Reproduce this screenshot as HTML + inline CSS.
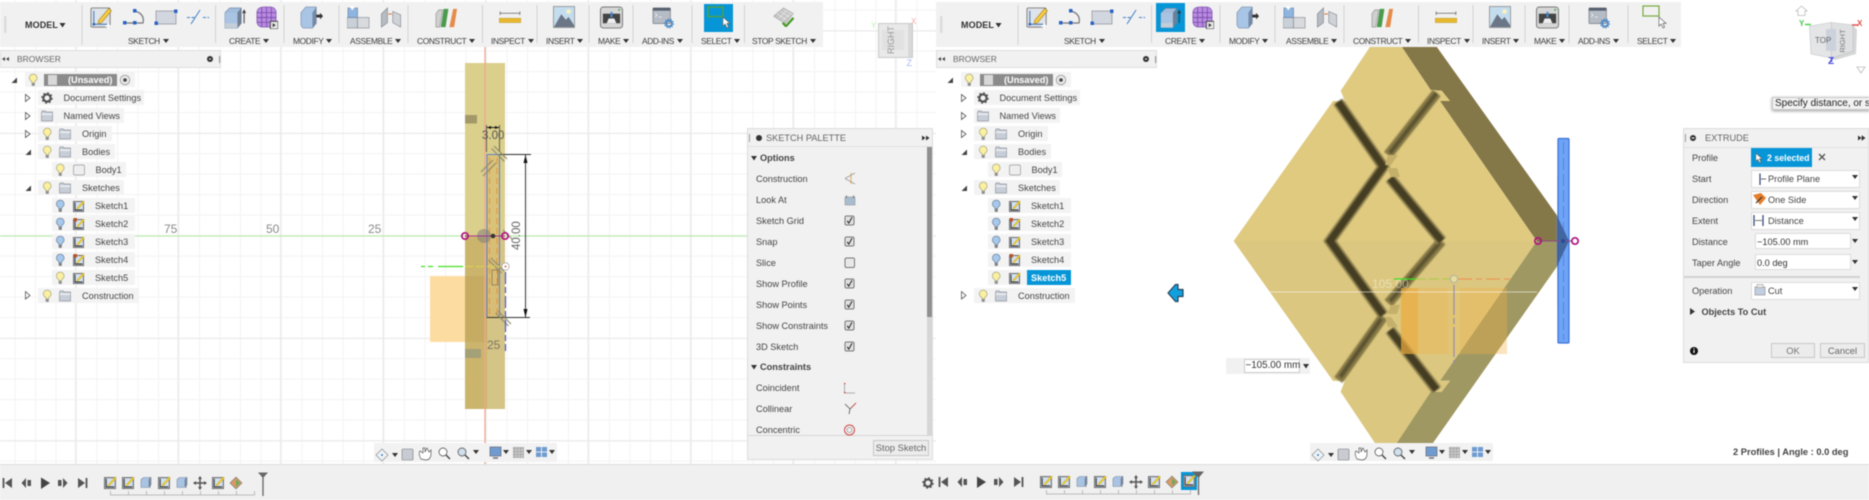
<!DOCTYPE html>
<html><head><meta charset="utf-8"><title>Fusion</title>
<style>
html,body{margin:0;padding:0;background:#fff}
#root{position:relative;width:1869px;height:500px;overflow:hidden;background:#fff;font-family:"Liberation Sans",sans-serif;filter:blur(.45px)}
.p{position:absolute;top:0;height:500px;overflow:hidden}
.abs,.t,.l,.r{position:absolute}
svg{position:absolute;left:0;top:0;overflow:visible}
.t{white-space:nowrap;line-height:12px;height:12px;margin-top:-6px;font-size:9.2px;color:#444}
.l{white-space:nowrap;line-height:10px;top:36px;font-size:8.4px;letter-spacing:-.35px;color:#3c3c3c}
.l i{display:inline-block;width:0;height:0;border-left:3px solid transparent;border-right:3px solid transparent;border-top:4.5px solid #333;margin-left:3px;vertical-align:1px}
.r{background:#f3f3f3;height:15px}
.b{font-weight:bold}
.g{background-color:#fff;background-image:linear-gradient(to right,#e8e8e8 1px,transparent 1px),linear-gradient(to bottom,#e9e9e9 1px,transparent 1px),linear-gradient(to right,#f3f3f3 1px,transparent 1px),linear-gradient(to bottom,#f3f3f3 1px,transparent 1px);background-size:102.5px 102.5px,102.5px 102.5px,20.5px 20.5px,20.5px 20.5px;background-position:75px 0,0 30.5px,14.5px 0,0 9.7px}
.sel{position:absolute;background:#fff;border:1px solid #ddd;box-sizing:border-box;height:18px}
.btn{position:absolute;background:#ececec;border:1px solid #c8c8c8;box-sizing:border-box;text-align:center;color:#666;font-size:9.4px}
</style></head><body>
<div id="root">
<svg width="0" height="0" style="position:absolute"><defs>
<filter id="gb" x="-10%" y="-10%" width="120%" height="120%"><feGaussianBlur stdDeviation="0.9"/></filter>
<symbol id="bulb" viewBox="0 0 10 14"><path d="M5 .7a4 4 0 0 0-2.200 7.400c.6.500.7 1.300.7 2h3c0-.7.100-1.500.7-2A4 4 0 0 0 5 .7z" fill="#fbf0a0" stroke="#9c9a7c" stroke-width=".7"/><rect x="3.400" y="10.500" width="3.200" height="2.800" fill="#8a8a8a"/></symbol>
<symbol id="bulbb" viewBox="0 0 10 14"><path d="M5 .7a4 4 0 0 0-2.200 7.400c.6.500.7 1.300.7 2h3c0-.7.100-1.500.7-2A4 4 0 0 0 5 .7z" fill="#a6c8ec" stroke="#66788e" stroke-width=".7"/><rect x="3.400" y="10.500" width="3.200" height="2.800" fill="#7a7a7a"/></symbol>
<symbol id="folder" viewBox="0 0 12 11"><path d="M.5 2V10.500H11.500V1.500H5L4.300.5H1z" fill="#c8ced8" stroke="#8f959e" stroke-width=".7"/><rect x=".8" y="3" width="10.400" height="1.400" fill="#eef0f2"/></symbol>
<symbol id="skm" viewBox="0 0 12 12"><rect x=".5" y="1.500" width="10" height="10" fill="#d3e0f0" stroke="#6c6c6c"/><path d="M2 2.500V10H9.500" fill="none" stroke="#222" stroke-width=".9"/><path d="M3.500 8.500L10.300 .8l1.200 1.200L4.600 9.400z" fill="#f8d31e" stroke="#9a7f20" stroke-width=".3"/></symbol>
<symbol id="skp" viewBox="0 0 12 12"><rect x=".5" y="1.500" width="10" height="10" fill="#d3e0f0" stroke="#6c6c6c"/><path d="M2 2.500V10H9.500" fill="none" stroke="#222" stroke-width=".9"/><path d="M3.500 8.500L10.300 .8l1.200 1.200L4.600 9.400z" fill="#f8d31e" stroke="#9a7f20" stroke-width=".3"/><rect x=".5" y="0" width="3.500" height="3.500" fill="#b9532b"/></symbol>
<symbol id="gear" viewBox="0 0 12 12"><circle cx="6" cy="6" r="3.600" fill="none" stroke="#555" stroke-width="2.200"/><circle cx="6" cy="6" r="5" fill="none" stroke="#555" stroke-width="1.500" stroke-dasharray="1.800 2.120"/></symbol>
<symbol id="bigsk" viewBox="0 0 24 24"><rect x="1" y="2" width="20" height="20" rx="1.500" fill="#dfe3ea" stroke="#7d7d7d"/><path d="M4 5V19H18" fill="none" stroke="#3b6fb5" stroke-width="1"/><circle cx="4" cy="19" r="1.400" fill="#2a63b5"/><path d="M9 15L19.500 2.500l3 2.500L12 17.500l-3.500 1z" fill="#f6c93f" stroke="#9a7d25" stroke-width=".6"/><path d="M16 21h6M19 18v6" stroke="#fff" stroke-width="1.800"/></symbol>
<symbol id="box" viewBox="0 0 24 24"><path d="M1 7L6 2H18V18L14 23H1z" fill="#a3bddd" stroke="#6f86a5" stroke-width=".7"/><path d="M14 7V23L18 18V2z" fill="#6f7f94"/><rect x="1" y="7" width="13" height="16" fill="#a9c3e2"/><path d="M1 18H14V23H1z" fill="#c4ced8"/><path d="M21 18V5M19.500 7.500L21 4.500l1.500 3" stroke="#333" fill="none" stroke-width="1"/></symbol>
<symbol id="mesh" viewBox="0 0 24 24"><path d="M2 6Q3 1 9 1H16Q21 1 22 6V17Q21 22 16 22H8Q3 22 2 17z" fill="#b88ae0" stroke="#7b52a8" stroke-width=".7"/><path d="M2 7H22M2 12H22M2 17H22M7 1V22M12 1V22M17 1V22" stroke="#6b3fa0" stroke-width=".7"/><rect x="16" y="16" width="8" height="8" fill="#e6e6e6" stroke="#444"/><path d="M18.500 18v4l3-2z" fill="#333"/></symbol>
<symbol id="press" viewBox="0 0 24 24"><path d="M1 7L6 1H17V18L13 23H3L1 20z" fill="#a9c5e6" stroke="#7d90a8" stroke-width=".7"/><path d="M13 7V23L17 18V1z" fill="#7489a6"/><path d="M17 9H21V7L24 10.500 21 14V12H17z" fill="#333"/></symbol>
<symbol id="asm1" viewBox="0 0 24 24"><rect x="0" y="12" width="11" height="11" fill="#c9d0d7" stroke="#8a8f95" stroke-width=".7"/><rect x="11" y="12" width="12" height="11" fill="#d8dadd" stroke="#8a8f95" stroke-width=".7"/><path d="M11 12V2H1V12z" fill="#8eb4e0" stroke="#6f86a5" stroke-width=".7"/><path d="M3 1.500h5M5.500 -1v5" stroke="#fff" stroke-width="1.800"/></symbol>
<symbol id="asm2" viewBox="0 0 24 24"><path d="M1 8L8 1V18L1 23z" fill="#b7bcc3" stroke="#7f858d" stroke-width=".7"/><path d="M14 5L23 9V23L14 18z" fill="#cfd3d8" stroke="#7f858d" stroke-width=".7"/><path d="M9 8H13" stroke="#d8702e" stroke-width="1.200"/></symbol>
<symbol id="plane" viewBox="0 0 24 24"><path d="M1 8L4 4H8L5 22H1z" fill="#cfcfcf" stroke="#8c8c8c" stroke-width=".6"/><path d="M6 22L9 3 H14L11 22z" fill="#4b9a4d"/><path d="M15 22L19 3H23L20 22z" fill="#e58c4b"/></symbol>
<symbol id="ruler" viewBox="0 0 24 14"><path d="M1 2.500H23M1 .5V4.500M23 .5V4.500" stroke="#666" stroke-width=".9"/><rect x="0" y="8" width="24" height="5" fill="#e8b82e" stroke="#a98a22" stroke-width=".4"/></symbol>
<symbol id="image" viewBox="0 0 24 24"><rect x=".5" y=".5" width="23" height="23" fill="#c3dcee" stroke="#999"/><circle cx="17" cy="6" r="2.500" fill="#faf3c0"/><path d="M1 23L9 9 14 15 17 12 23 21V23z" fill="#6b7686"/></symbol>
<symbol id="make" viewBox="0 0 24 24"><rect x=".5" y="1" width="23" height="22" rx="3" fill="#d6d6d6" stroke="#777"/><rect x="3" y="8" width="18" height="10" fill="#444"/><path d="M7 18L9 13H15L17 18z" fill="#eee"/><path d="M12 6V12" stroke="#3f8ed8" stroke-width="2"/><circle cx="20" cy="4" r="1" fill="#3aa34a"/></symbol>
<symbol id="addin" viewBox="0 0 24 24"><rect x=".5" y="1" width="19" height="17" rx="1" fill="#b5bcc6" stroke="#8b8f96"/><rect x=".5" y="1" width="19" height="3" fill="#55606e"/><path d="M3 7L5 9 3 11M7 11H10" stroke="#fff" fill="none" stroke-width=".7"/><circle cx="18" cy="18" r="3.200" fill="none" stroke="#4a88c6" stroke-width="2"/><circle cx="18" cy="18" r="4.800" fill="none" stroke="#4a88c6" stroke-width="1.300" stroke-dasharray="1.500 1.500"/></symbol>
<symbol id="stop" viewBox="0 0 24 24"><path d="M0 11L12 1 24 8 14 20z" fill="#c5c5c5" stroke="#8e8e8e" stroke-width=".6"/><path d="M4 8L15 15M8 5L19 12M12 3L23 9M6 14L16 4M10 17L20 8" stroke="#ededed" stroke-width=".7"/><path d="M11 19L15 23 24 13" fill="none" stroke="#4d9a2d" stroke-width="2.800"/></symbol>
<symbol id="cursor" viewBox="0 0 10 14"><path d="M1 1V11L3.500 8.800 5.500 13 7.300 12.200 5.500 8H9z" fill="#fff" stroke="#666" stroke-width=".8"/></symbol>
<symbol id="chk" viewBox="0 0 10 10"><rect x=".5" y=".5" width="9" height="9" rx="1.500" fill="#e0e0e0" stroke="#777"/><path d="M2.700 5.300L4.300 7.700 7.500 1.800" fill="none" stroke="#222" stroke-width="1"/></symbol>
<symbol id="mtbox" viewBox="0 0 12 12"><path d="M1 3L3.500 1H11V8.500L8.500 11H1z" fill="#a9c3e2" stroke="#7a8da6" stroke-width=".6"/><path d="M8.500 3V11L11 8.500V1z" fill="#7c93b2"/></symbol>

<g id="dv"><rect x="4" y="16" width="2.500" height="17" fill="#dcdcdc"/>
<path d="M82 5V45M215.500 5V43M284 5V43M339 5V43M408 5V43M482.500 5V43M537 5V43M589 5V43M633 5V43M692 5V43" stroke="#d2d2d2" stroke-width="1" fill="none"/></g>

<g id="tb">
<use href="#bigsk" x="90" y="6" width="23" height="23"/>
<path d="M124 23H143Q145 14 135 11" fill="none" stroke="#777" stroke-width="1.200"/>
<rect x="123" y="21" width="3.500" height="3.500" fill="#2a63c5"/><rect x="133" y="21" width="3.500" height="3.500" fill="#2a63c5"/><rect x="133" y="9" width="3.500" height="3.500" fill="#2a63c5"/>
<rect x="156" y="11" width="20" height="13" fill="#d2d7df" stroke="#8a8f95" stroke-width=".7"/>
<rect x="154.500" y="21.500" width="3.500" height="3.500" fill="#2a63c5"/><rect x="174" y="9.500" width="3.500" height="3.500" fill="#2a63c5"/>
<path d="M187 17.500H195M203 17.500H209" stroke="#3f7fc8" stroke-width="1" stroke-dasharray="3 1.500"/><path d="M191 24L200 10" stroke="#3f7fc8" stroke-width="1"/>
<use href="#mesh" x="255" y="6" width="23" height="23"/>
<use href="#press" x="300" y="6" width="23" height="23"/>
<use href="#asm1" x="347" y="6" width="23" height="23"/>
<use href="#asm2" x="380" y="7" width="22" height="21"/>
<use href="#plane" x="435" y="6" width="23" height="23"/>
<use href="#ruler" x="499" y="11" width="22" height="12.500"/>
<use href="#image" x="553" y="6" width="22" height="22"/>
<use href="#make" x="600" y="6" width="23" height="23"/>
<use href="#addin" x="652" y="7" width="23" height="22"/>
</g>

<g id="tree">
<path d="M11.500 83H17V77.500z" fill="#444"/><path d="M25.500 94.500L30 98 25.500 101.500z" fill="#fff" stroke="#555" stroke-width=".8"/><path d="M25.500 112.500L30 116 25.500 119.500z" fill="#fff" stroke="#555" stroke-width=".8"/><path d="M25.500 130.500L30 134 25.500 137.500z" fill="#fff" stroke="#555" stroke-width=".8"/>
<path d="M25.500 155H31V149.500z" fill="#444"/><path d="M25.500 191H31V185.500z" fill="#444"/><path d="M25.500 291.500L30 295.500 25.500 299z" fill="#fff" stroke="#555" stroke-width=".8"/>
<use href="#bulb" x="28.500" y="73.500" width="9.500" height="13"/>
<rect x="48" y="75" width="9" height="10" fill="#d8d8d8"/>
<circle cx="125" cy="80" r="4.800" fill="#e8e8e8" stroke="#888" stroke-width=".7"/><circle cx="125" cy="80" r="1.800" fill="#444"/>
<use href="#gear" x="41" y="92" width="12" height="12"/>
<use href="#folder" x="41" y="110.500" width="12" height="11"/>
<use href="#bulb" x="42.500" y="127.500" width="9.500" height="13"/><use href="#folder" x="59" y="128.500" width="12" height="11"/>
<use href="#bulb" x="42.500" y="145.500" width="9.500" height="13"/><use href="#folder" x="59" y="146.500" width="12" height="11"/>
<use href="#bulb" x="55.500" y="163.500" width="9.500" height="13"/><rect x="73.500" y="165" width="11" height="10" rx="1.500" fill="#eee" stroke="#999" stroke-width=".7"/>
<use href="#bulb" x="42.500" y="181.500" width="9.500" height="13"/><use href="#folder" x="59" y="182.500" width="12" height="11"/>
<use href="#bulbb" x="55.500" y="199.500" width="9.500" height="13"/><use href="#skm" x="73" y="200" width="12" height="12"/>
<use href="#bulbb" x="55.500" y="217.500" width="9.500" height="13"/><use href="#skp" x="73" y="218" width="12" height="12"/>
<use href="#bulbb" x="55.500" y="235.500" width="9.500" height="13"/><use href="#skm" x="73" y="236" width="12" height="12"/>
<use href="#bulbb" x="55.500" y="253.500" width="9.500" height="13"/><use href="#skp" x="73" y="254" width="12" height="12"/>
<use href="#bulb" x="55.500" y="271.500" width="9.500" height="13"/><use href="#skm" x="73" y="272" width="12" height="12"/>
<use href="#bulb" x="42.500" y="289.500" width="9.500" height="13"/><use href="#folder" x="59" y="290.500" width="12" height="11"/>
<circle cx="210" cy="59" r="3" fill="#333"/><rect x="209" y="58.500" width="2" height="1" fill="#fff"/><rect x="219" y="56" width="1.200" height="7" fill="#999"/>
<path d="M2 59L5 57V61zM6 59L9 57V61z" fill="#444"/>
</g>

<g id="nav">
<path d="M382 449L388 455 382 461 376 455z" fill="#eef3f8" stroke="#888" stroke-width=".7"/><circle cx="382" cy="455" r="1" fill="#3b82c4" />
<path d="M392 453H398L395 457z" fill="#333"/>
<rect x="402" y="449" width="11" height="11" rx="1" fill="#c8ccd2" stroke="#777" stroke-width=".6"/>
<path d="M421 459Q418 454 420 451L423 453V448H425V452L427 448 429 452 431 450 431 455Q430 460 426 460z" fill="#fff" stroke="#555" stroke-width=".7"/>
<circle cx="443" cy="452" r="4" fill="#fff" stroke="#666" stroke-width=".9"/><path d="M446 455L450 459" stroke="#444" stroke-width="1.400"/>
<circle cx="462" cy="452" r="4" fill="#cfe0ee" stroke="#666" stroke-width=".9"/><path d="M465 455L469 459" stroke="#444" stroke-width="1.400"/>
<path d="M473 450H479L476 454z" fill="#333"/>
<rect x="490" y="447" width="11" height="9" fill="#6f9bd1" stroke="#667" stroke-width=".7"/><path d="M493 458H498" stroke="#667" stroke-width="1.400"/>
<path d="M503 450H509L506 454z" fill="#333"/>
<rect x="513" y="447" width="11" height="11" fill="#aaa"/><path d="M513 450H524M513 453H524M513 456H524M516 447V458M519 447V458M522 447V458" stroke="#ddd" stroke-width=".5"/>
<path d="M526 450H532L529 454z" fill="#333"/>
<rect x="536" y="447" width="11" height="10" fill="#6f9bd1"/><path d="M536 452H547M541.500 447V457" stroke="#fff" stroke-width=".8"/>
<path d="M549 450H555L552 454z" fill="#333"/>
</g>

<g id="tl">
<path d="M3.500 478V488" stroke="#555" stroke-width="1.800"/><path d="M12 478V488L5 483z" fill="#555"/>
<path d="M26 478V488L21.500 483zM27.500 480H31V486H27.500z" fill="#555"/>
<path d="M41 477.500V489L50 483z" fill="#444"/>
<path d="M58 480H61.500V486H58zM63 478V488L67.500 483z" fill="#555"/>
<path d="M78 478V488L85 483z" fill="#555"/><path d="M86.500 478V488" stroke="#555" stroke-width="1.800"/>
<use href="#skm" x="104" y="476" width="13" height="13"/><use href="#skm" x="122" y="476" width="13" height="13"/><use href="#mtbox" x="140" y="476" width="12" height="13"/><path d="M150 488V477" stroke="#777" stroke-width=".8"/>
<use href="#skm" x="158" y="476" width="13" height="13"/><use href="#mtbox" x="176" y="476" width="12" height="13"/><path d="M186 488V477" stroke="#777" stroke-width=".8"/>
<path d="M200 477V489M194 483H206" stroke="#555" stroke-width="1.500"/><path d="M198 479L200 476 202 479zM198 487L200 490 202 487zM196 481L193 483 196 485zM204 481L207 483 204 485z" fill="#555"/>
<use href="#skm" x="212" y="476" width="13" height="13"/>
<path d="M230 483L236 477 242 483 236 489z" fill="#d89a64" stroke="#777" stroke-width=".6"/><path d="M236 479L240 483 236 487z" fill="#6ea860"/>
<path d="M110.500 491V495H254.500V491M128.500 491V495M146.500 491V495M164.500 491V495M182.500 491V495M200.500 491V495M218.500 491V495M236.500 491V495" fill="none" stroke="#bbb" stroke-width="1"/>
</g>
</defs></svg>

<!-- LEFT PANE -->
<div class="p g" style="left:0;width:936px;top:0">
<svg width="936" height="500">
<path d="M0 236H748" stroke="#b8ecb0" stroke-width="1.300"/>
<rect x="430" y="276" width="57" height="66" fill="#fddca2"/>
<rect x="465" y="63" width="40" height="346" fill="#dacf8b"/>
<rect x="465" y="237" width="22" height="172" fill="#cbb56c"/>
<rect x="487" y="237" width="18" height="172" fill="#d4c486"/>
<rect x="465" y="276" width="22" height="66" fill="#c6ac62"/>
<rect x="465" y="115" width="12" height="8.500" fill="#a59868"/>
<rect x="465" y="349" width="16" height="9" fill="#a4a078"/>
<path d="M485 47V464" stroke="#eea990" stroke-width="1.300"/>
<rect x="487" y="154.500" width="12.500" height="163" fill="#dbb86a" opacity=".55"/>
<rect x="487" y="154.500" width="12.500" height="163" fill="none" stroke="#5f7fc6" stroke-width="1"/>
<path d="M489.500 158V317M497 158V317" stroke="#e1963a" stroke-width="1" stroke-dasharray="6 4"/>
<path d="M487 317.500H530M500 154.500H531" stroke="#333" stroke-width=".9"/>
<path d="M525.500 155V317" stroke="#222" stroke-width=".9"/>
<path d="M525.500 155L523.500 163H527.500zM525.500 317.500L523.500 309H527.500z" fill="#111"/>
<path d="M486.500 125V152M499.500 125V152" stroke="#444" stroke-width=".8"/>
<path d="M487 127.500H499" stroke="#222" stroke-width="1"/><path d="M487 127.500L491 126V129zM499 127.500L495 126V129z" fill="#111"/>
<path d="M494 146L507 159M491.500 148.500L504.500 161.500M496 163L483 176M493 160L481 172" stroke="#8f8a6c" stroke-width="1.400" opacity=".8"/>
<path d="M491 258L504 271M488.500 260L501.500 273M498 311L511 324M495.500 313L508.500 326M503 230L512 239" stroke="#8f8a6c" stroke-width="1.400" opacity=".8"/>
<rect x="492" y="270" width="6" height="15" fill="none" stroke="#8a7a50" stroke-width=".8"/>
<circle cx="484" cy="236" r="7" fill="#777" opacity=".5"/>
<path d="M465 236H505" stroke="#a0308a" stroke-width="1"/>
<circle cx="465" cy="236" r="3.200" fill="none" stroke="#b0147e" stroke-width="1.700"/><circle cx="505" cy="236" r="3.200" fill="none" stroke="#b0147e" stroke-width="1.700"/><circle cx="493" cy="236" r="2.300" fill="#333"/>
<path d="M421 266.500H425M428 266.500H433M438 266.500H463" stroke="#45e020" stroke-width="1.300"/><path d="M465 266.500H502" stroke="#d8d84a" stroke-width="1" stroke-dasharray="8 3"/>
<circle cx="505.500" cy="266.500" r="3.700" fill="#fff" stroke="#aaa" stroke-width=".8"/><circle cx="505.500" cy="266.500" r="1" fill="#e06060"/>
<path d="M505.500 272V351" stroke="#3a44e6" stroke-width="1" stroke-dasharray="12 3 6 3"/>
<rect x="878.500" y="23.500" width="34" height="34" fill="#e9e9e9" stroke="#c9c9c9"/><rect x="908" y="24" width="4" height="33" fill="#d8d8d8"/><rect x="882" y="30" width="22" height="20" fill="#e1e1e1"/>
</svg>
<div class="t" style="left:868px;top:40px;font-size:9px;color:#999;transform:rotate(-90deg);transform-origin:center;margin-left:9px">RIGHT</div>
<div class="t" style="left:871px;top:26px;font-size:8px;color:#bdeeb4">Y</div>
<div class="t" style="left:911px;top:22px;font-size:8px;color:#f0a8a8">X</div>
<div class="t" style="left:906.500px;top:63px;font-size:9px;color:#aab6f5">Z</div>
<div class="t" style="left:164px;top:229px;font-size:12px;color:#8a8a8a">75</div>
<div class="t" style="left:266px;top:229px;font-size:12px;color:#8a8a8a">50</div>
<div class="t" style="left:368px;top:229px;font-size:12px;color:#8a8a8a">25</div>
<div class="t" style="left:487px;top:345px;font-size:12px;color:#7e7560">25</div>
<div class="t" style="left:482px;top:136px;font-size:11.500px;color:#555">3.00</div>
<div class="t" style="left:503px;top:236px;font-size:11.500px;color:#666;transform:rotate(-90deg);width:28px;text-align:center">40.00</div>

<div class="abs" style="left:0;top:2px;width:822.500px;height:45px;background:#f1f1f1"></div>
<div class="abs" style="left:704px;top:4px;width:29px;height:28px;background:#0696d7"></div>
<div class="r" style="left:374px;top:443px;width:183px;height:19px;background:#f2f2f2"></div>
<div class="abs" style="left:0;top:50px;width:221px;height:18px;background:#f1f1f1;border:1px solid #dedede;box-sizing:border-box"></div>
<div class="r" style="left:25px;top:72px;width:110px"></div>
<div class="abs" style="left:44px;top:74px;width:73px;height:12px;background:#8b8b8b"></div>
<div class="r" style="left:38px;top:90px;width:106px"></div>
<div class="r" style="left:38px;top:108px;width:86px"></div>
<div class="r" style="left:38px;top:126px;width:74px"></div>
<div class="r" style="left:38px;top:144px;width:77px"></div>
<div class="r" style="left:52px;top:162px;width:74px"></div>
<div class="r" style="left:38px;top:180px;width:86px"></div>
<div class="r" style="left:52px;top:198px;width:83px"></div>
<div class="r" style="left:52px;top:216px;width:83px"></div>
<div class="r" style="left:52px;top:234px;width:83px"></div>
<div class="r" style="left:52px;top:252px;width:83px"></div>
<div class="r" style="left:52px;top:270px;width:83px"></div>
<div class="r" style="left:38px;top:288px;width:101px"></div>
<svg width="936" height="500">
<use href="#dv"/><use href="#tb"/><use href="#tree"/><use href="#nav"/>
<use href="#box" x="224" y="6" width="23" height="23"/>
<path d="M744.500 5V43" stroke="#d2d2d2"/>
<rect x="708" y="7" width="15" height="9.500" fill="none" stroke="#5ca32c" stroke-width="1.200"/><use href="#cursor" x="722" y="16" width="9" height="13"/>
<use href="#stop" x="772" y="7" width="23" height="20"/>
<path d="M59.500 23H65.500L62.500 27.500z" fill="#333"/>
</svg>
<div class="t b" style="left:25px;top:25px;font-size:9px;letter-spacing:.1px;color:#333">MODEL</div>
<div class="l" style="left:128px">SKETCH<i></i></div><div class="l" style="left:229px">CREATE<i></i></div><div class="l" style="left:293px">MODIFY<i></i></div><div class="l" style="left:350px">ASSEMBLE<i></i></div><div class="l" style="left:417px">CONSTRUCT<i></i></div><div class="l" style="left:491px">INSPECT<i></i></div><div class="l" style="left:546px">INSERT<i></i></div><div class="l" style="left:598px">MAKE<i></i></div><div class="l" style="left:642px">ADD-INS<i></i></div><div class="l" style="left:701px">SELECT<i></i></div><div class="l" style="left:752px">STOP SKETCH<i></i></div>
<div class="t" style="left:17px;top:59px;font-size:8.500px;color:#666">BROWSER</div>
<div class="t b" style="left:68px;top:80px;color:#fff">(Unsaved)</div>
<div class="t" style="left:63.500px;top:98px">Document Settings</div><div class="t" style="left:63.500px;top:116px">Named Views</div><div class="t" style="left:82px;top:134px">Origin</div><div class="t" style="left:82px;top:152px">Bodies</div><div class="t" style="left:95.500px;top:170px">Body1</div><div class="t" style="left:82px;top:188px">Sketches</div><div class="t" style="left:95px;top:206px">Sketch1</div><div class="t" style="left:95px;top:224px">Sketch2</div><div class="t" style="left:95px;top:242px">Sketch3</div><div class="t" style="left:95px;top:260px">Sketch4</div><div class="t" style="left:95px;top:278px">Sketch5</div><div class="t" style="left:82px;top:296px">Construction</div>

<div class="abs" style="left:747px;top:128px;width:186px;height:332px;background:#f1f1f1;border:1px solid #dcdcdc;box-sizing:border-box"></div>
<div class="abs" style="left:748px;top:146px;width:184px;height:1px;background:#e0e0e0"></div>
<div class="abs" style="left:927px;top:147px;width:5px;height:288px;background:#d6d6d6"></div>
<div class="abs" style="left:927px;top:147px;width:5px;height:170px;background:#8f8f8f"></div>
<div class="abs" style="left:748px;top:435px;width:184px;height:1px;background:#d5d5d5"></div>
<svg width="936" height="500">
<rect x="749" y="134" width="1" height="8" fill="#999"/><circle cx="759" cy="138" r="3" fill="#333"/><path d="M922 135.500L925.500 138 922 140.500zM926 135.500L929.500 138 926 140.500z" fill="#333"/>
<path d="M751 156H757L754 160.500zM751 365H757L754 369.500z" fill="#333"/>
<path d="M845 178.500L855 173M845 178.500L855 184" stroke="#999" fill="none" stroke-width=".8"/><path d="M851 173V184" stroke="#d99a4a" stroke-width=".8"/>
<rect x="845" y="197" width="10" height="8" fill="#a8bcd0" stroke="#888" stroke-width=".5"/><path d="M846.500 195.500V198M853.500 195.500V198" stroke="#777"/>
<use href="#chk" x="844.500" y="215.500" width="10" height="10"/><use href="#chk" x="844.500" y="236.500" width="10" height="10"/>
<rect x="845" y="258" width="9.500" height="9.500" rx="1.500" fill="#e8e8e8" stroke="#777"/>
<use href="#chk" x="844.500" y="278.500" width="10" height="10"/><use href="#chk" x="844.500" y="299.500" width="10" height="10"/><use href="#chk" x="844.500" y="320.500" width="10" height="10"/><use href="#chk" x="844.500" y="341.500" width="10" height="10"/>
<path d="M844.500 383V393H855" fill="none" stroke="#999" stroke-width=".8"/><path d="M844 383.500h1.500M844 392.500h1.500" stroke="#d33"/>
<path d="M845 404L850 409 849 414M850 409L856 403" fill="none" stroke="#555" stroke-width=".8"/><path d="M851 408L856 403" stroke="#d44" stroke-width=".8"/>
<circle cx="849.500" cy="430" r="5" fill="none" stroke="#d64545" stroke-width="1"/><circle cx="849.500" cy="430" r="2.500" fill="none" stroke="#999" stroke-width=".8"/>
</svg>
<div class="t" style="left:766px;top:138px;font-size:9.200px;color:#666">SKETCH PALETTE</div>
<div class="t b" style="left:760px;top:158px">Options</div>
<div class="t" style="left:756px;top:179px">Construction</div><div class="t" style="left:756px;top:200px">Look At</div><div class="t" style="left:756px;top:220.500px">Sketch Grid</div><div class="t" style="left:756px;top:241.500px">Snap</div><div class="t" style="left:756px;top:262.500px">Slice</div><div class="t" style="left:756px;top:283.500px">Show Profile</div><div class="t" style="left:756px;top:304.500px">Show Points</div><div class="t" style="left:756px;top:325.500px">Show Constraints</div><div class="t" style="left:756px;top:346.500px">3D Sketch</div>
<div class="t b" style="left:760px;top:367px">Constraints</div>
<div class="t" style="left:756px;top:388px">Coincident</div><div class="t" style="left:756px;top:409px">Collinear</div><div class="t" style="left:756px;top:430px">Concentric</div>
<div class="btn" style="left:873px;top:440px;width:56px;height:16px;line-height:14px">Stop Sketch</div>

<div class="abs" style="left:0;top:464px;width:936px;height:36px;background:#f0f0f0;border-top:1px solid #dcdcdc;box-sizing:border-box"></div>
<svg width="936" height="500"><use href="#tl"/><path d="M258 472.500H268L263 478z" fill="#666"/><path d="M263 475V496" stroke="#666" stroke-width="1.300"/><use href="#gear" x="922" y="477" width="12" height="12"/></svg>
</div>

<!-- RIGHT PANE -->
<div class="p" style="left:936px;width:933px;background:#fff">
<svg width="933" height="500">
<g transform="translate(-936 0)">
<path d="M1401.700 46.700H1436.700L1556.700 215V241H1536.700L1440 101H1450L1441.700 90.700 1430.700 90z" fill="#857848"/>
<path d="M1536.700 241H1556.700V267L1433 443H1396.700L1430.700 391.700H1441.700L1450 380.700H1440z" fill="#a09862"/>
<path d="M1233.700 241L1333 101H1345L1340.700 90.700 1370 46.700H1401.700L1430.700 90 1441.700 90.700 1450 101H1440L1536.700 241 1440 380.700H1450L1441.700 391.700H1430.700L1396.700 443H1375L1340.700 391.700 1345 380.700H1333z" fill="#dfca80"/>
<path d="M1233.700 241L1536.700 241 1440 380.700H1450L1441.700 391.700H1430.700L1396.700 443H1375L1340.700 391.700 1345 380.700H1333z" fill="#dbc77f"/>
<g fill="none" stroke-linejoin="miter" filter="url(#gb)">
<path d="M1436.700 93L1388 155M1441.700 241L1388.300 303.300M1383.300 316.700L1338.300 380" stroke="#857845" stroke-width="10"/>
<path d="M1436.700 93L1390 153M1439.700 243L1390.300 301M1381.300 318.700L1340.300 377" stroke="#5b5330" stroke-width="4"/>
<path d="M1338 101.700L1383.300 166.700 1330 241 1383.300 315M1390 178.300L1441.700 241M1390 330L1436.700 390" stroke="#8f8150" stroke-width="11"/>
<path d="M1338 101.700L1383.300 166.700 1330 241 1383.300 315M1390 178.300L1441.700 241M1390 330L1436.700 390" stroke="#453e22" stroke-width="7.500"/>
</g>
<path d="M1388 155H1398L1391 165H1385zM1387 168H1397L1400 177H1391zM1388 327H1398L1391 317H1385zM1387 314H1397L1400 305H1391z" fill="#c4b06a"/>
<rect x="1401" y="288" width="106" height="66" fill="#f2b247" opacity=".36"/>
<rect x="1401" y="288" width="17" height="66" fill="#e9a93a" opacity=".55"/>
<rect x="1448" y="288" width="12" height="66" fill="#dfca80" opacity=".55"/>
<path d="M1270 292H1537" stroke="#fff" stroke-width="1" opacity=".55"/>
<path d="M1394 279H1416" stroke="#38e020" stroke-width="1.300"/><path d="M1416 279H1450" stroke="#a8c84a" stroke-width="1" stroke-dasharray="10 3"/>
<path d="M1458 279H1514" stroke="#ee9050" stroke-width="1" stroke-dasharray="14 4 6 4"/>
<circle cx="1454" cy="279" r="3.600" fill="#e6dc9e" stroke="#aaa" stroke-width=".8"/>
<path d="M1454 285V363" stroke="#8f80b8" stroke-width="1" stroke-dasharray="30 3 6 3"/>
<rect x="1557" y="176" width="4" height="130" fill="#c8c8c8" opacity=".4"/>
<rect x="1558" y="138.500" width="11" height="204.500" rx="1" fill="#6ea3f6" stroke="#3a73d6" stroke-width="1.200"/>
<path d="M1563.500 142V340" stroke="#4a7fd8" stroke-width=".8" stroke-dasharray="12 4"/>
<path d="M1556.700 215L1569 241 1556.700 267z" fill="#3c5c92" opacity=".85"/>
<path d="M1538 241H1575" stroke="#8a4a80" stroke-width="1"/>
<circle cx="1538" cy="241" r="3.200" fill="none" stroke="#b0147e" stroke-width="1.700"/><circle cx="1575" cy="241" r="3.200" fill="#fff" stroke="#b0147e" stroke-width="1.700"/><circle cx="1563" cy="241" r="2" fill="#1c4f9e"/>
<path d="M1168 293L1175.500 284.500H1178V289.500H1183V296.500H1178V301.500H1175.500z" fill="#10a0e0" stroke="#2b4458" stroke-width="1.200" stroke-linejoin="round"/>
<path d="M1809.500 26L1831.500 22.500V58L1811 54z" fill="#e4e5e7" stroke="#c4c4c4" stroke-width=".6"/>
<path d="M1831.500 22.500L1853 25V51L1831.500 58z" fill="#dfe0e2" stroke="#c4c4c4" stroke-width=".6"/>
<path d="M1853 25L1857 30 1856 54 1835 60 1831.500 58 1853 51z" fill="#bbb" opacity=".6"/>
<rect x="1826" y="29" width="10" height="22" fill="#ccd2dc"/>
<path d="M1805 24.500H1811" stroke="#48d448" stroke-width="1.500"/><path d="M1852 25H1858" stroke="#e05050" stroke-width="1.500"/><path d="M1831.500 58V62" stroke="#4a50e0" stroke-width="1.500"/>
<path d="M1796 11L1801.500 6 1807 11H1805V15.500H1798V11z" fill="#fff" stroke="#bbb" stroke-width=".8"/>
<path d="M1857 67H1865L1861 73z" fill="#fff" stroke="#bbb" stroke-width=".8"/>
</g>
</svg>
<div class="t" style="left:436px;top:284px;font-size:12px;color:#fff;opacity:.45">105.00</div>
<div class="t" style="left:863px;top:23.500px;font-size:8px;color:#47c447;font-weight:bold">Y</div>
<div class="t" style="left:921px;top:24px;font-size:8px;color:#e05050;font-weight:bold">X</div>
<div class="t" style="left:892px;top:62px;font-size:10px;color:#4a50e0;font-weight:bold">Z</div>
<div class="t" style="left:879px;top:40.500px;font-size:8px;color:#666">TOP</div>
<div class="t" style="left:895px;top:41px;font-size:7.500px;color:#777;transform:rotate(-90deg);width:24px;text-align:center">RIGHT</div>

<div class="abs" style="left:290px;top:358px;width:84px;height:16px;background:#f1f1f1"></div>
<div class="abs" style="left:308px;top:359px;width:56px;height:14px;background:#fff;border:1px solid #ccc;box-sizing:border-box"></div>
<div class="t" style="left:309.500px;top:366px;font-size:9.800px;color:#333">−105.00 mm</div>
<svg width="933" height="500"><path d="M367 364H373L370 368.500z" fill="#333"/></svg>

<div class="abs" style="left:0;top:2px;width:745px;height:45px;background:#f1f1f1"></div>
<div class="abs" style="left:220px;top:3px;width:28.500px;height:29px;background:#0696d7"></div>
<div class="r" style="left:374px;top:443px;width:183px;height:18px;background:#f2f2f2"></div>
<div class="abs" style="left:0;top:50px;width:221px;height:18px;background:#f1f1f1;border:1px solid #dedede;box-sizing:border-box"></div>
<div class="r" style="left:25px;top:72px;width:110px"></div>
<div class="abs" style="left:44px;top:74px;width:73px;height:12px;background:#8b8b8b"></div>
<div class="r" style="left:38px;top:90px;width:106px"></div>
<div class="r" style="left:38px;top:108px;width:86px"></div>
<div class="r" style="left:38px;top:126px;width:74px"></div>
<div class="r" style="left:38px;top:144px;width:77px"></div>
<div class="r" style="left:52px;top:162px;width:74px"></div>
<div class="r" style="left:38px;top:180px;width:86px"></div>
<div class="r" style="left:52px;top:198px;width:83px"></div>
<div class="r" style="left:52px;top:216px;width:83px"></div>
<div class="r" style="left:52px;top:234px;width:83px"></div>
<div class="r" style="left:52px;top:252px;width:83px"></div>
<div class="r" style="left:52px;top:270px;width:83px"></div>
<div class="abs" style="left:91px;top:270px;width:44px;height:15px;background:#0696d7"></div>
<div class="r" style="left:38px;top:288px;width:101px"></div>
<svg width="933" height="500">
<use href="#dv"/><use href="#tb"/><use href="#tree"/><use href="#nav"/>
<use href="#box" x="224" y="6" width="22" height="23"/>
<rect x="707" y="6" width="16" height="10" fill="none" stroke="#78ab3c" stroke-width="1.200"/><use href="#cursor" x="722" y="16" width="9" height="13"/>
<path d="M59.500 23H65.500L62.500 27.500z" fill="#333"/>
</svg>
<div class="t b" style="left:25px;top:25px;font-size:9px;letter-spacing:.1px;color:#333">MODEL</div>
<div class="l" style="left:128px">SKETCH<i></i></div><div class="l" style="left:229px">CREATE<i></i></div><div class="l" style="left:293px">MODIFY<i></i></div><div class="l" style="left:350px">ASSEMBLE<i></i></div><div class="l" style="left:417px">CONSTRUCT<i></i></div><div class="l" style="left:491px">INSPECT<i></i></div><div class="l" style="left:546px">INSERT<i></i></div><div class="l" style="left:598px">MAKE<i></i></div><div class="l" style="left:642px">ADD-INS<i></i></div><div class="l" style="left:701px">SELECT<i></i></div>
<div class="t" style="left:17px;top:59px;font-size:8.500px;color:#666">BROWSER</div>
<div class="t b" style="left:68px;top:80px;color:#fff">(Unsaved)</div>
<div class="t" style="left:63.500px;top:98px">Document Settings</div><div class="t" style="left:63.500px;top:116px">Named Views</div><div class="t" style="left:82px;top:134px">Origin</div><div class="t" style="left:82px;top:152px">Bodies</div><div class="t" style="left:95.500px;top:170px">Body1</div><div class="t" style="left:82px;top:188px">Sketches</div><div class="t" style="left:95px;top:206px">Sketch1</div><div class="t" style="left:95px;top:224px">Sketch2</div><div class="t" style="left:95px;top:242px">Sketch3</div><div class="t" style="left:95px;top:260px">Sketch4</div><div class="t b" style="left:95px;top:278px;color:#fff">Sketch5</div><div class="t" style="left:82px;top:296px">Construction</div>

<div class="abs" style="left:836px;top:97px;width:110px;height:13px;background:#f2f2f2;border:1px solid #c8c8c8;box-shadow:0 1px 3px #999;box-sizing:border-box"></div>
<div class="t" style="left:839px;top:104px;font-size:10px;color:#222">Specify distance, or s</div>

<div class="abs" style="left:747px;top:128px;width:186px;height:235px;background:#f1f1f1;border:1px solid #dcdcdc;box-sizing:border-box"></div>
<div class="abs" style="left:748px;top:147px;width:185px;height:1px;background:#e0e0e0"></div>
<div class="abs" style="left:815px;top:148px;width:61px;height:19px;background:#0696d7"></div>
<div class="sel" style="left:815px;top:169.500px;width:109px"></div>
<div class="sel" style="left:815px;top:190.500px;width:109px"></div>
<div class="sel" style="left:815px;top:211.500px;width:109px"></div>
<div class="abs" style="left:818.500px;top:233px;width:96px;height:16px;background:#fff;border:1px solid #ddd;box-sizing:border-box"></div>
<div class="abs" style="left:818.500px;top:254px;width:96px;height:16px;background:#fff;border:1px solid #ddd;box-sizing:border-box"></div>
<div class="abs" style="left:748px;top:276px;width:176px;height:2px;background:#d2d2d2"></div>
<div class="sel" style="left:815px;top:282px;width:109px"></div>
<svg width="933" height="500">
<rect x="749" y="134" width="1" height="8" fill="#999"/><circle cx="757" cy="138" r="3" fill="#333"/><rect x="755.500" y="137.500" width="3" height="1" fill="#fff"/>
<path d="M926 135.500V140.500" stroke="#333" stroke-width=".8"/><path d="M922 135.500L925.500 138 922 140.500zM926 135.500L929.500 138 926 140.500z" fill="#333"/>
<use href="#cursor" x="819" y="152" width="8" height="12" />
<path d="M883 154L889 160M889 154L883 160" stroke="#555" stroke-width="1.300"/>
<path d="M824 173.500V185" stroke="#2b3f70" stroke-width="1.200"/><path d="M825 179H830" stroke="#444" stroke-width=".8"/>
<path d="M817 195L825 193 830 198 824 205z" fill="#e47e2b"/><path d="M820 203L826 197" stroke="#333" stroke-width="1.200"/>
<path d="M818 215V226M827 215V226" stroke="#2b3f70" stroke-width="1.200"/><path d="M819 220.500H826" stroke="#555" stroke-width=".8"/>
<rect x="819" y="287" width="10" height="8" fill="#c2cfe0" stroke="#888" stroke-width=".6"/><rect x="821" y="284.500" width="6" height="3" fill="#eee" stroke="#888" stroke-width=".5"/>
<path d="M916 175H922L919 179zM916 196H922L919 200zM916 217H922L919 221zM916 239H922L919 243zM916 260H922L919 264zM916 287H922L919 291z" fill="#333"/>
<path d="M754 308L759 311.500 754 315z" fill="#333"/>
<circle cx="758" cy="351" r="4" fill="#111"/><rect x="757.400" y="350" width="1.200" height="3" fill="#fff"/><rect x="757.400" y="348.300" width="1.200" height="1" fill="#fff"/>
</svg>
<div class="t" style="left:769px;top:138px;font-size:9.200px;color:#666">EXTRUDE</div>
<div class="t" style="left:756px;top:157.500px">Profile</div><div class="t" style="left:756px;top:178.500px">Start</div><div class="t" style="left:756px;top:199.500px">Direction</div><div class="t" style="left:756px;top:220.500px">Extent</div><div class="t" style="left:756px;top:241.500px">Distance</div><div class="t" style="left:756px;top:262.500px">Taper Angle</div><div class="t" style="left:756px;top:291px">Operation</div>
<div class="t" style="left:831px;top:157.500px;color:#fff;font-weight:bold;font-size:8.800px">2 selected</div>
<div class="t" style="left:832px;top:178.500px">Profile Plane</div><div class="t" style="left:832px;top:199.500px">One Side</div><div class="t" style="left:832px;top:220.500px">Distance</div>
<div class="t" style="left:821px;top:241.500px;color:#333">−105.00 mm</div><div class="t" style="left:821px;top:262.500px;color:#333">0.0 deg</div><div class="t" style="left:832px;top:291px">Cut</div>
<div class="t b" style="left:765.500px;top:311.500px">Objects To Cut</div>
<div class="btn" style="left:835px;top:343px;width:44px;height:15px;line-height:13px;color:#777">OK</div>
<div class="btn" style="left:884px;top:343px;width:45px;height:15px;line-height:13px">Cancel</div>
<div class="t" style="left:797px;top:452px;font-size:9.300px;font-weight:bold;color:#444">2 Profiles | Angle : 0.0 deg</div>

<div class="abs" style="left:0;top:464px;width:933px;height:36px;background:#f0f0f0;border-top:1px solid #dcdcdc;box-sizing:border-box"></div>
<svg width="933" height="500"><g transform="translate(0 -1)"><use href="#tl"/><rect x="245" y="473" width="16" height="18" fill="#0696d7"/><use href="#skm" x="247" y="475" width="13" height="13"/><path d="M256 472.500H268L262.500 479z" fill="#666"/><path d="M262.500 476V496" stroke="#666" stroke-width="1.300"/></g></svg>
</div>
</div>
</body></html>
